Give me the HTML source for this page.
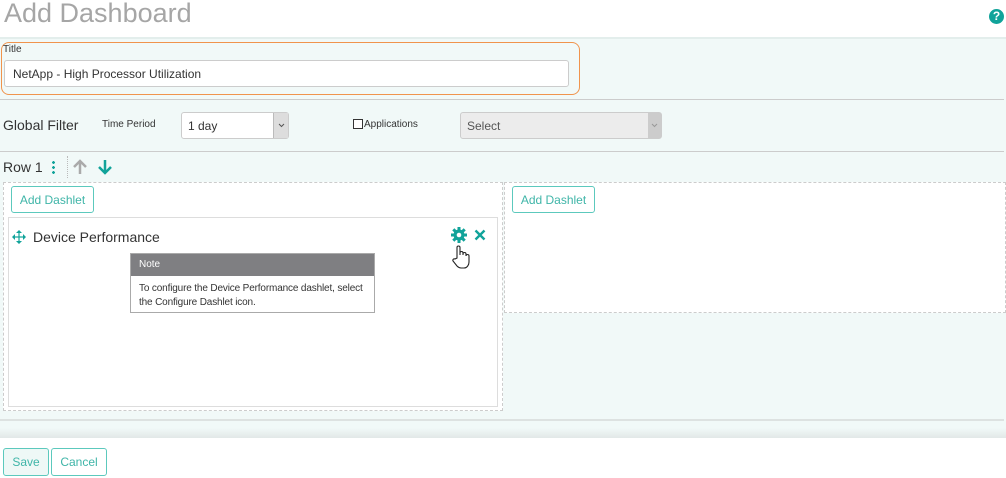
<!DOCTYPE html>
<html><head><style>
*{box-sizing:border-box;margin:0;padding:0}
body{width:1006px;height:478px;position:relative;background:#fff;font-family:"Liberation Sans",sans-serif;overflow:hidden;color:#333}
.a{position:absolute}
.btn{position:absolute;border:1px solid #5cc9bd;border-radius:3px;color:#3fb5a8;font-size:12px;display:flex;align-items:center;justify-content:center;background:#fff}
</style></head><body>
<div class="a" style="left:4px;top:-2px;font-size:27px;color:#a6a6a6">Add Dashboard</div>
<div class="a" style="left:989px;top:9px;width:15px;height:15px;border-radius:50%;background:#11a39a;color:#fff;font-size:12px;font-weight:bold;text-align:center;line-height:15px">?</div>
<div class="a" style="left:0;top:37px;width:1006px;height:400px;background:#f1f9f8;border-top:2px solid #e3eeec"></div>
<div class="a" style="left:0;top:428px;width:1006px;height:10px;background:linear-gradient(#f1f9f8,#e2e8e7)"></div>
<div class="a" style="left:1px;top:42px;width:579px;height:53px;border:1px solid #f0944d;border-radius:8px"></div>
<div class="a" style="left:3px;top:44px;font-size:10px;color:#333">Title</div>
<div class="a" style="left:4px;top:60px;width:565px;height:27px;background:#fff;border:1px solid #ccc;border-radius:3px;font-size:12px;padding:6px 8px;color:#333">NetApp - High Processor Utilization</div>
<div class="a" style="left:0;top:99px;width:1004px;height:1px;background:#ccc"></div>
<div class="a" style="left:3px;top:117px;font-size:14px">Global Filter</div>
<div class="a" style="left:102px;top:119px;font-size:10px">Time Period</div>
<div class="a" style="left:181px;top:112px;width:108px;height:27px;background:#fff;border:1px solid #ccc;border-radius:3px;font-size:12px;padding:6px 6px">1 day</div>
<div class="a" style="left:273px;top:113px;width:15px;height:25px;background:#ddd;border-left:1px solid #bbb"><svg width="15" height="25"><path d="M5 11l2.5 2.5L10 11" stroke="#555" fill="none"/></svg></div>
<div class="a" style="left:353px;top:119px;width:10px;height:10px;border:1px solid #333;background:#fff"></div>
<div class="a" style="left:364px;top:119px;font-size:10px">Applications</div>
<div class="a" style="left:460px;top:112px;width:202px;height:27px;background:#ececec;border:1px solid #ccc;border-radius:3px;font-size:12px;padding:6px 6px;color:#555">Select</div>
<div class="a" style="left:648px;top:113px;width:13px;height:25px;background:#ccc"><svg width="13" height="25"><path d="M4 11l2.5 2.5L9 11" stroke="#999" fill="none"/></svg></div>
<div class="a" style="left:0;top:151px;width:1004px;height:1px;background:#ccc"></div>
<div class="a" style="left:3px;top:159px;font-size:14px">Row 1</div>
<div class="a" style="left:52px;top:160px;width:3px;height:15px;background:radial-gradient(circle,#11a39a 1.3px,transparent 1.5px) 0 0/3px 5px"></div>
<div class="a" style="left:67px;top:156px;height:22px;border-left:1px dotted #bbb"></div>
<svg class="a" style="left:73px;top:159px" width="14" height="16"><path d="M7 15V2M1 8l6-6 6 6" stroke="#aaa" stroke-width="2.5" fill="none"/></svg>
<svg class="a" style="left:98px;top:159px" width="14" height="16"><path d="M7 1v13M1 8l6 6 6-6" stroke="#11a39a" stroke-width="2.5" fill="none"/></svg>
<div class="a" style="left:3px;top:182px;width:500px;height:229px;border:1px dashed #ccc;background:#fff"></div>
<div class="a" style="left:504px;top:182px;width:502px;height:131px;border:1px dashed #ccc;background:#fff"></div>
<div class="btn" style="left:11px;top:186px;width:83px;height:27px">Add Dashlet</div>
<div class="btn" style="left:512px;top:186px;width:83px;height:27px">Add Dashlet</div>
<div class="a" style="left:8px;top:217px;width:490px;height:190px;border:1px solid #ddd;background:#fff"></div>
<svg class="a" style="left:12px;top:230px" width="14" height="14"><g fill="#11a39a"><path d="M7 0l3 3H4zM7 14l3-3H4zM0 7l3-3v6zM14 7l-3-3v6z"/><rect x="6" y="3" width="2" height="8" opacity=".6"/><rect x="3" y="6" width="8" height="2" opacity=".6"/></g></svg>
<div class="a" style="left:33px;top:229px;font-size:14px;color:#333">Device Performance</div>
<svg class="a" style="left:451px;top:227px" width="16" height="16" viewBox="0 0 16 16"><g fill="#11a39a"><circle cx="8" cy="8" r="5.5"/><g stroke="#11a39a" stroke-width="3"><path d="M8 0v16M0 8h16M2.3 2.3l11.4 11.4M13.7 2.3L2.3 13.7"/></g></g><circle cx="8" cy="8" r="2.3" fill="#fff"/></svg>
<svg class="a" style="left:474px;top:229px" width="12" height="12"><path d="M1.5 1.5l9 9M10.5 1.5l-9 9" stroke="#11a39a" stroke-width="2.4"/></svg>
<svg class="a" style="left:451px;top:244px" width="22" height="26" viewBox="0 0 22 26"><path d="M6 14V3.5a1.5 1.5 0 013 0V11V9a1.5 1.5 0 013 0v2V10a1.5 1.5 0 013 0v2a1.5 1.5 0 013 0v6c0 3-2 6-5 6h-3c-2 0-3-1-4-2l-4-5a1.5 1.5 0 012-2z" fill="#fff" stroke="#222" stroke-width="1.1"/></svg>
<div class="a" style="left:130px;top:253px;width:245px;height:60px;border:1px solid #aaa;background:#fff">
<div style="height:22px;background:#7f7f82;color:#fff;font-size:10px;padding:5px 8px">Note</div>
<div style="font-size:10px;padding:6px 5px 0 8px;line-height:14px;color:#333;letter-spacing:-.15px">To configure the Device Performance dashlet, select the Configure Dashlet icon.</div></div>
<div class="a" style="left:0;top:419px;width:1004px;height:2px;background:#dde2e1"></div>
<div class="btn" style="left:3px;top:448px;width:46px;height:28px;background:#eef8f6">Save</div>
<div class="btn" style="left:51px;top:448px;width:56px;height:28px">Cancel</div>
</body></html>
